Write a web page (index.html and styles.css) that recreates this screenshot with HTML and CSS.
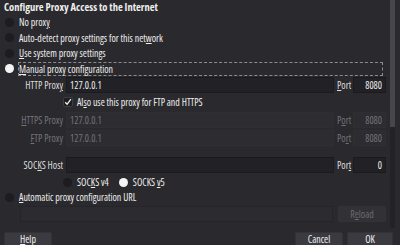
FILE: index.html
```html
<!DOCTYPE html>
<html lang="en">
<head>
    <meta charset="UTF-8">
    <title>Connection Settings</title>
    <link rel="stylesheet" href="styles.css">
</head>
<body>
    <div class="window">
        <div class="main">
            <div class="pane">
                <div class="title">Configure Proxy Access to the Internet</div>
                <div class="radio-row"><span class="radio"></span><span>No prox<u>y</u></span></div>
                <div class="radio-row"><span class="radio"></span><span>Auto-detect proxy settings for this net<u>w</u>ork</span></div>
                <div class="radio-row"><span class="radio"></span><span><u>U</u>se system proxy settings</span></div>
                <div class="radio-row"><span class="radio checked"></span><span class="focus-label"><u>M</u>anual proxy configuration</span></div>

                <div class="field-row row-http">
                    <span class="field-label">HTTP Prox<u>y</u></span>
                    <span class="input">127.0.0.1</span>
                    <span class="port-label"><u>P</u>ort</span>
                    <span class="input port">8080</span>
                </div>
                <div class="check-row">
                    <span class="checkbox">
                        <svg width="8" height="8" viewBox="0 0 8 8"><path d="M1.2 4.3 L3.1 6.3 L6.9 1.2" fill="none" stroke="#f2f2f2" stroke-width="1.3"/></svg>
                    </span>
                    <span>Al<u>s</u>o use this proxy for FTP and HTTPS</span>
                </div>
                <div class="field-row row-https disabled">
                    <span class="field-label"><u>H</u>TTPS Proxy</span>
                    <span class="input">127.0.0.1</span>
                    <span class="port-label">P<u>o</u>rt</span>
                    <span class="input port">8080</span>
                </div>
                <div class="field-row row-ftp disabled">
                    <span class="field-label"><u>F</u>TP Proxy</span>
                    <span class="input">127.0.0.1</span>
                    <span class="port-label">Po<u>r</u>t</span>
                    <span class="input port">8080</span>
                </div>
                <div class="field-row row-socks">
                    <span class="field-label">SOC<u>K</u>S Host</span>
                    <span class="input"></span>
                    <span class="port-label">Por<u>t</u></span>
                    <span class="input port">0</span>
                </div>
                <div class="socks-row">
                    <span class="radio"></span><span class="socks-v4">SOC<u>K</u>S v4</span>
                    <span class="radio checked"></span><span>SOCKS <u>v</u>5</span>
                </div>
                <div class="radio-row auto-row"><span class="radio"></span><span><u>A</u>utomatic proxy configuration URL</span></div>
                <div class="url-row">
                    <span class="input url"></span>
                    <span class="button disabled-btn">R<u>e</u>load</span>
                </div>
            </div>
            <div class="scrollbar"><div class="thumb"></div></div>
        </div>
        <div class="buttons">
            <span class="button"><u>H</u>elp</span>
            <span class="spacer"></span>
            <span class="button">Cancel</span>
            <span class="button ok">OK</span>
        </div>
    </div>
</body>
</html>
```

FILE: styles.css
```css
body {
    margin: 0;
    background-color: #2a292e;
    font-family: "Open Sans", "Liberation Sans", sans-serif;
    font-stretch: 75%;
    font-weight: 500;
    font-size: 9.9px;
    color: #eeeeec;
}

u {
    text-underline-offset: 1px;
}

.window {
    width: 400px;
    height: 245px;
    overflow: hidden;
    display: flex;
    flex-direction: column;
}

.main {
    display: flex;
    height: 229px;
    flex-shrink: 0;
}

.pane {
    width: 390px;
    padding-left: 4px;
    box-sizing: border-box;
    display: flex;
    flex-direction: column;
}

.scrollbar {
    width: 5px;
    height: 228px;
    background-color: #232227;
}

.thumb {
    height: 127px;
    background-color: #47464c;
}

.title {
    height: 14.5px;
    line-height: 14px;
    font-size: 10.5px;
    font-weight: 700;
    white-space: nowrap;
}

.radio-row {
    height: 15.5px;
    display: flex;
    align-items: center;
}

.radio {
    width: 9px;
    height: 9px;
    border-radius: 50%;
    background-color: #1d1c20;
    margin-left: 1px;
    margin-right: 5px;
    flex-shrink: 0;
}

.radio.checked {
    background-color: #f4f4f4;
}

.focus-label {
    flex: 1;
    height: 14px;
    line-height: 12px;
    box-sizing: border-box;
    border: 1px dashed #8c8b90;
    margin-left: -1px;
    margin-right: 7px;
}

.field-row {
    display: flex;
    align-items: center;
    height: 17px;
}

.row-https {
    height: 18.5px;
}

.row-ftp {
    height: 17.5px;
}

.row-socks {
    margin-top: 10px;
}

.field-label {
    width: 59px;
    margin-right: 3px;
    text-align: right;
    white-space: nowrap;
    color: #dcdcdc;
}

.input {
    width: 268px;
    height: 16px;
    box-sizing: border-box;
    background-color: #222126;
    border: 1px solid #1b1a1e;
    padding: 0 3px;
    line-height: 14px;
    color: #eeeeec;
}

.port-label {
    width: 16px;
    margin-left: 3px;
    color: #dcdcdc;
}

.input.port {
    width: 33px;
    text-align: right;
}

.disabled .field-label,
.disabled .port-label,
.disabled .input {
    color: #737278;
}

.disabled .input {
    background-color: #2d2c31;
    border-color: #2f2e33;
}

.check-row {
    height: 17px;
    display: flex;
    align-items: center;
    padding-left: 59px;
}

.checkbox {
    width: 10px;
    height: 10px;
    box-sizing: border-box;
    border: 1px solid #3e3d43;
    border-radius: 2px;
    background-color: #1d1c20;
    margin-right: 4px;
    display: flex;
    align-items: center;
    justify-content: center;
}

.socks-row {
    height: 17px;
    display: flex;
    align-items: center;
    padding-left: 58px;
}

.socks-v4 {
    margin-right: 9px;
}

.auto-row {
    height: 13px;
}

.url-row {
    height: 21px;
    display: flex;
    align-items: center;
    padding-left: 16px;
}

.input.url {
    width: 313px;
    background-color: #2c2b30;
    border-color: #252429;
}

.button {
    width: 48px;
    height: 16px;
    box-sizing: border-box;
    border-radius: 2px;
    background-color: #3b3a40;
    border: 1px solid #333237;
    text-align: center;
    line-height: 14px;
    color: #f2f2f2;
}

.buttons .button {
    height: 13px;
    border-bottom: none;
    border-radius: 2px 2px 0 0;
    padding-top: 1px;
    line-height: 11px;
}

.disabled-btn {
    margin-left: 5px;
    background-color: #323136;
    color: #6c6b71;
}

.buttons {
    display: flex;
    padding: 3px 7px 0 4px;
    gap: 4px;
}

.buttons .spacer {
    flex: 1;
}

.buttons .button.ok {
    width: 46px;
}
```
